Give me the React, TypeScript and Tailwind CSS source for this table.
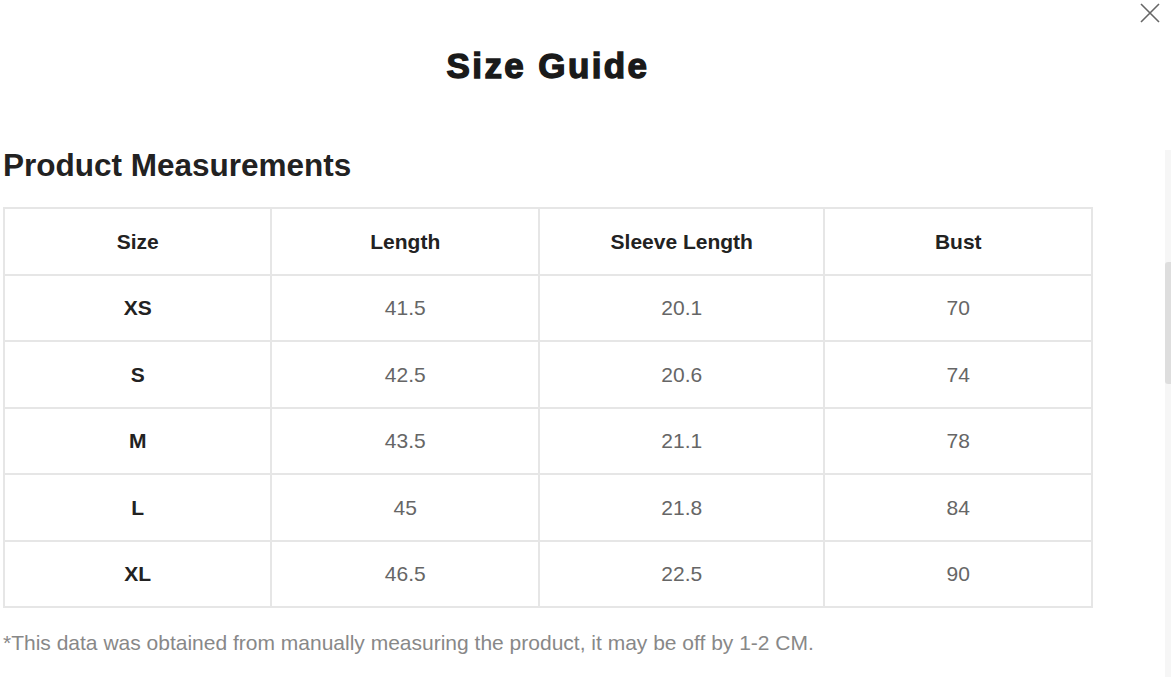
import React from 'react';

const rows = [
  { size: 'XS', length: '41.5', sleeve: '20.1', bust: '70', h: 'h-[66px]' },
  { size: 'S', length: '42.5', sleeve: '20.6', bust: '74', h: 'h-[67px]' },
  { size: 'M', length: '43.5', sleeve: '21.1', bust: '78', h: 'h-[66px]' },
  { size: 'L', length: '45', sleeve: '21.8', bust: '84', h: 'h-[67px]' },
  { size: 'XL', length: '46.5', sleeve: '22.5', bust: '90', h: 'h-[66px]' },
];

const cols = ['w-[268px]', 'w-[268px]', 'w-[286px]', 'w-[268px]'];

export default function App() {
  return (
    <div className="relative w-[1171px] h-[677px] overflow-hidden bg-white font-['Liberation_Sans',Arial,sans-serif]">
      {/* close */}
      <button className="absolute right-[10px] top-[2px] text-[#666]">
        <svg width="22" height="22" viewBox="0 0 22 22" fill="none" stroke="currentColor" strokeWidth="1.6">
          <path d="M2 2 L20 20 M20 2 L2 20" />
        </svg>
      </button>

      {/* scrollbar */}
      <div className="absolute right-0 top-[150px] bottom-0 w-[6px] bg-[#f6f6f6]">
        <div className="mt-[112px] h-[122px] w-full rounded-l-[3px] bg-[#dedede]" />
      </div>

      <div className="flex flex-col pl-[3px] pt-[44px]">
        <h1 className="w-[1090px] text-center text-[35px] leading-[44px] font-bold text-[#1a1a1a] tracking-[2.4px] [-webkit-text-stroke:1.4px_#1a1a1a]">
          Size Guide
        </h1>
        <h2 className="mt-[58px] text-[31.5px] leading-[38px] font-bold text-[#222]">
          Product Measurements
        </h2>
        <table className="mt-[23px] border-collapse w-[1090px] text-[21px]">
          <thead>
            <tr>
              {['Size', 'Length', 'Sleeve Length', 'Bust'].map((h, i) => (
                <th key={h} className={`${cols[i]} h-[67px] border-2 border-[#e6e6e6] text-center font-bold text-[#222]`}>
                  {h}
                </th>
              ))}
            </tr>
          </thead>
          <tbody>
            {rows.map((r) => (
              <tr key={r.size}>
                <td className={`${r.h} border-2 border-[#e6e6e6] text-center font-bold text-[#222]`}>{r.size}</td>
                <td className={`${r.h} border-2 border-[#e6e6e6] text-center text-[#666]`}>{r.length}</td>
                <td className={`${r.h} border-2 border-[#e6e6e6] text-center text-[#666]`}>{r.sleeve}</td>
                <td className={`${r.h} border-2 border-[#e6e6e6] text-center text-[#666]`}>{r.bust}</td>
              </tr>
            ))}
          </tbody>
        </table>
        <p className="mt-[22px] text-[21px] leading-[26px] text-[#888]">
          *This data was obtained from manually measuring the product, it may be off by 1-2 CM.
        </p>
      </div>
    </div>
  );
}
